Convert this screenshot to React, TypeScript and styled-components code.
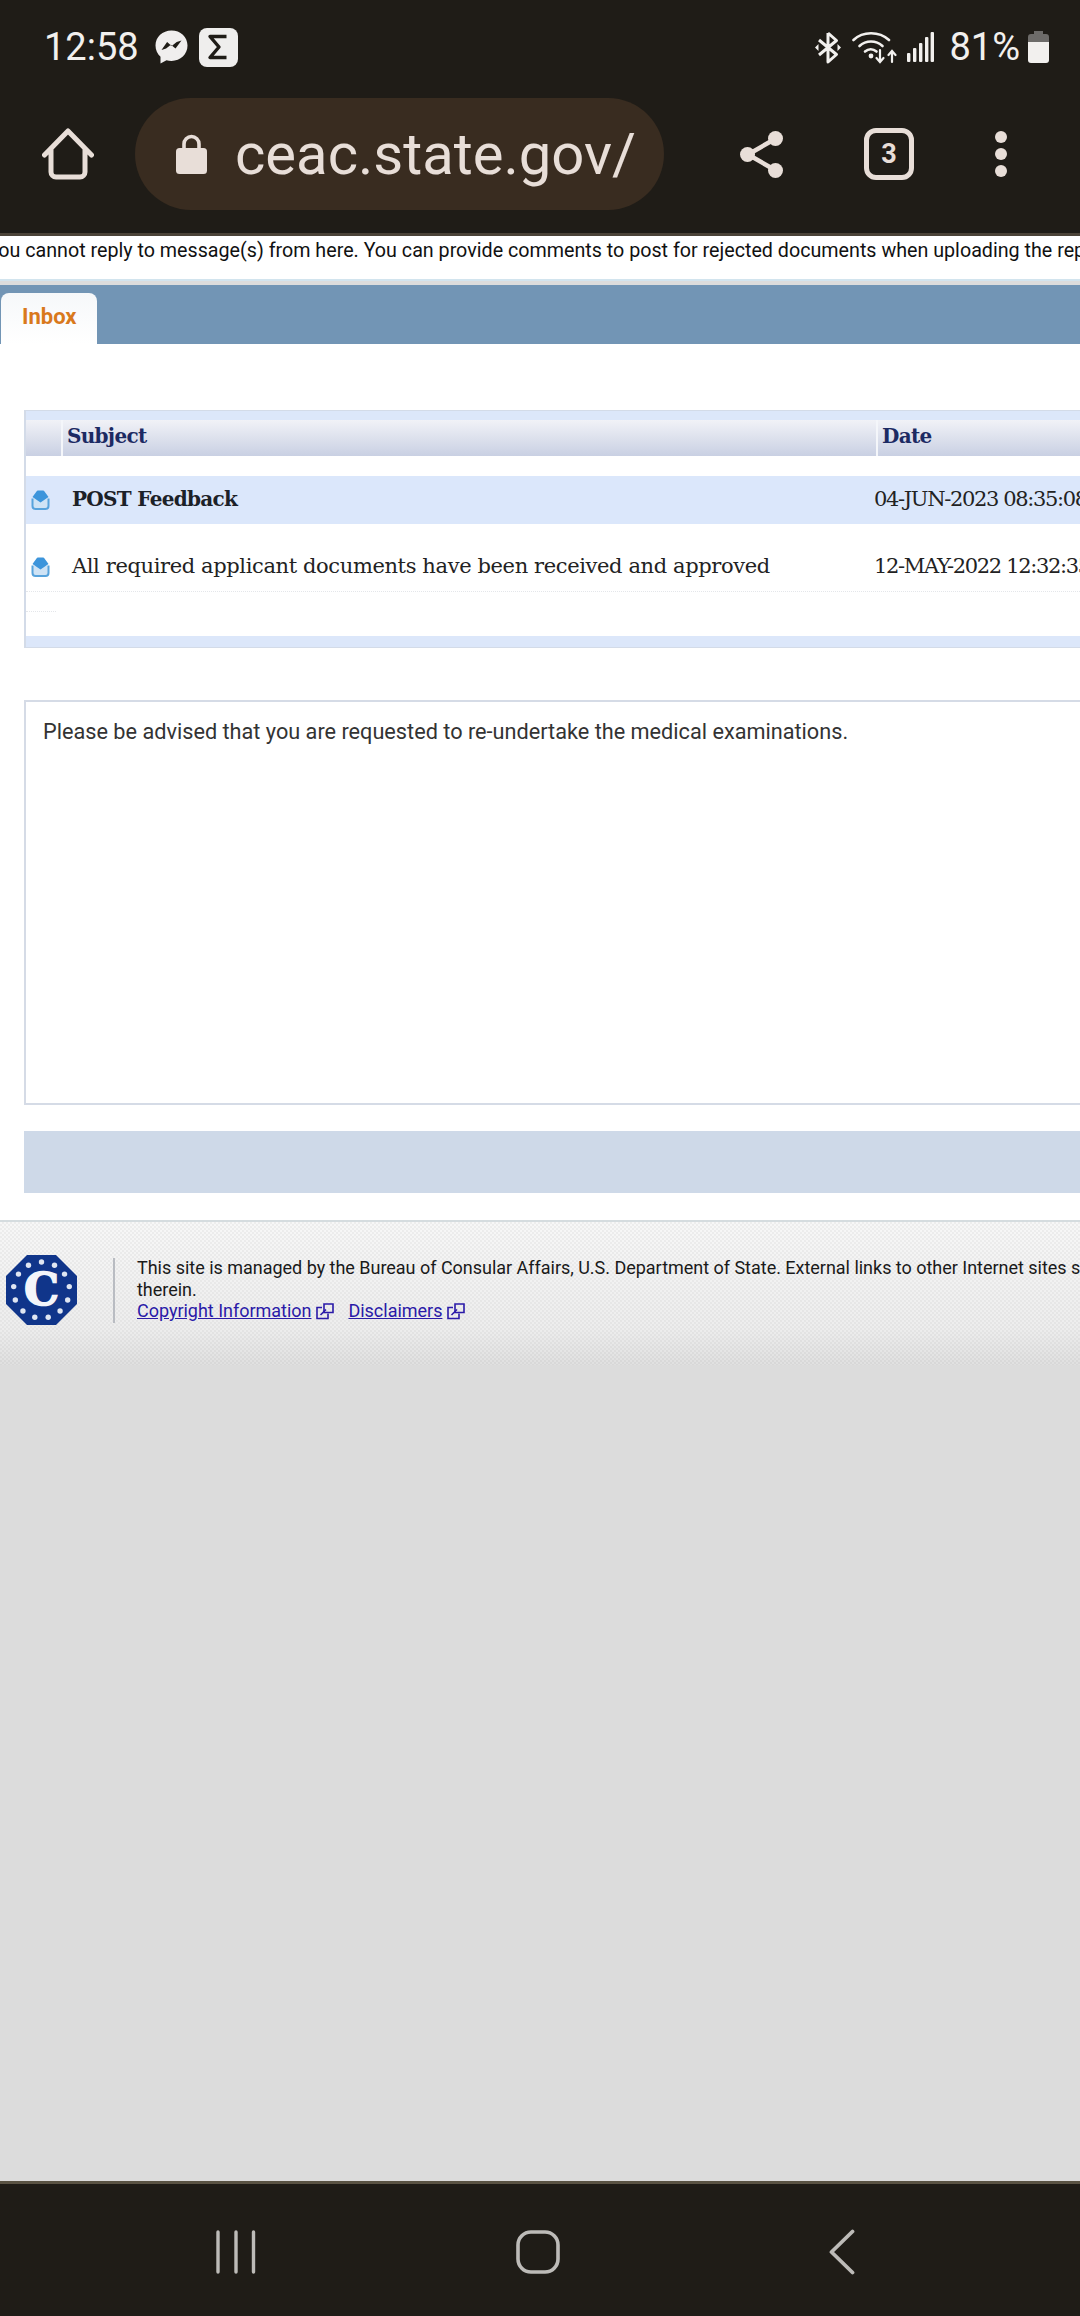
import * as React from 'react'
import styled, { createGlobalStyle } from 'styled-components'

const Global = createGlobalStyle`
  html, body { margin: 0; padding: 0; background: #dcdcdc; }
  body { font-family: Roboto, "Liberation Sans", sans-serif; }
`

const serif = `"DejaVu Serif", "Liberation Serif", serif`

const App = () => (
  <Page>
    <Global />
    <Chrome>
      <StatusBar>
        <StatusLeft>
          <Clock>12:58</Clock>
          <MessengerIcon />
          <SigmaIcon />
        </StatusLeft>
        <StatusRight>
          <BluetoothIcon />
          <WifiIcon />
          <SignalIcon />
          <Battery>81%</Battery>
          <BatteryIcon />
        </StatusRight>
      </StatusBar>
      <Toolbar>
        <HomeIcon />
        <UrlPill>
          <LockIcon />
          <UrlText>ceac.state.gov/</UrlText>
        </UrlPill>
        <ShareSlot>
          <ShareIcon />
        </ShareSlot>
        <TabCount>3</TabCount>
        <MenuDots>
          <i />
          <i />
          <i />
        </MenuDots>
      </Toolbar>
    </Chrome>
    <ChromeEdge />
    <Notice>
      You cannot reply to message(s) from here. You can provide comments to post for rejected documents when uploading the replacement documents.
    </Notice>
    <TabBar>
      <Tab>Inbox</Tab>
    </TabBar>
    <Content>
      <MessageTable>
        <TableHead>
          <HeadCell />
          <HeadCell>Subject</HeadCell>
          <HeadCell>Date</HeadCell>
        </TableHead>
        <Row $selected>
          <IconCell>
            <MailIcon />
          </IconCell>
          <SubjectCell $selected>POST Feedback</SubjectCell>
          <DateCell>04-JUN-2023 08:35:08</DateCell>
        </Row>
        <Row>
          <IconCell>
            <MailIcon />
          </IconCell>
          <SubjectCell>All required applicant documents have been received and approved</SubjectCell>
          <DateCell>12-MAY-2022 12:32:35</DateCell>
        </Row>
        <EmptyRow />
        <TableFoot />
      </MessageTable>
      <MessageBody>Please be advised that you are requested to re-undertake the medical examinations.</MessageBody>
      <ActionBand />
    </Content>
    <Footer>
      <SealIcon />
      <FooterDivider />
      <FooterText>
        This site is managed by the Bureau of Consular Affairs, U.S. Department of State. External links to other Internet sites should not be construed as an endorsement of the views or privacy policies contained
        <br />
        therein.
        <br />
        <FooterLink>Copyright Information</FooterLink>
        <ExternalIcon />
        <FooterLink $spaced>Disclaimers</FooterLink>
        <ExternalIcon />
      </FooterText>
    </Footer>
    <Blank />
    <NavEdge />
    <NavBar>
      <RecentsIcon />
      <HomeButtonIcon />
      <BackIcon />
    </NavBar>
  </Page>
)

const MessengerIcon = () => (
  <svg width="33" height="34" viewBox="0 0 33 34">
    <path d="M16.500 0.500C7.500 0.500 0.500 7 0.500 15.600c0 4.600 1.900 8.500 5 11.200v6.700l6-3.300c1.600 .45 3.300 .7 5 .7 9 0 16-6.500 16-15.300S25.500 .5 16.500 .5z" fill="#f0eeee" />
    <path d="M6.500 20l5.600-8 4.600 4 5-3.900 4.800-1.600-6 8-4.600-3.700-4.800 3.700z" fill="#1f1c17" />
  </svg>
)

const SigmaIcon = () => (
  <SigmaBox>
    <svg width="24" height="26" viewBox="0 0 24 26">
      <path d="M20.500 2.500H4L13 13 4 23.500h16.500" fill="none" stroke="#1f1c17" strokeWidth="3.400" strokeLinejoin="round" />
    </svg>
  </SigmaBox>
)

const BluetoothIcon = () => (
  <svg width="28" height="33" viewBox="0 0 28 33">
    <path d="M14 2v29l8.500-7.500L5 9M14 2l8.500 7.500L5 24" fill="none" stroke="#f2f0ee" strokeWidth="3" strokeLinejoin="round" />
    <path d="M1 16.500l3.500-3.500v7zM27 16.500l-3.500-3.500v7z" fill="#f2f0ee" />
  </svg>
)

const WifiIcon = () => (
  <svg width="45" height="34" viewBox="0 0 45 34">
    <g fill="none" stroke="#f2f0ee" strokeWidth="2.600" strokeLinecap="round">
      <path d="M1.500 10C11 1 27 1 37 10" />
      <path d="M7.500 16c6.500-6 16.500-6 23 0" />
      <path d="M13 21.500c3.500-3 8-3 11.500 0" />
      <path d="M28 20v12M24.500 28l3.500 4 3.500-4" strokeWidth="2.200" />
      <path d="M40 32V21M36.500 25l3.500-4 3.500 4" strokeWidth="2.200" />
    </g>
    <circle cx="19" cy="26" r="2.400" fill="#f2f0ee" />
  </svg>
)

const SignalIcon = () => (
  <svg width="27" height="30" viewBox="0 0 27 30">
    <g fill="#f2f0ee">
      <rect x="0" y="21" width="3.400" height="9" rx="1" />
      <rect x="6" y="16" width="3.400" height="14" rx="1" />
      <rect x="12" y="11" width="3.400" height="19" rx="1" />
      <rect x="18" y="5" width="3.400" height="25" rx="1" />
      <rect x="23.600" y="0" width="3.400" height="30" rx="1" />
    </g>
  </svg>
)

const BatteryIcon = () => (
  <svg width="21" height="32" viewBox="0 0 21 32">
    <path d="M6 0h9v3h3a3 3 0 0 1 3 3v5H0V6a3 3 0 0 1 3-3h3z" fill="#6d6b69" />
    <path d="M0 11h21v18a3 3 0 0 1-3 3H3a3 3 0 0 1-3-3z" fill="#f2f0ee" />
  </svg>
)

const HomeIcon = () => (
  <svg width="52" height="52" viewBox="0 0 52 52">
    <path d="M2.500 27L26 3l23.500 24M9 21.500V44a5 5 0 0 0 5 5h24a5 5 0 0 0 5-5V21.500" fill="none" stroke="#e8ded8" strokeWidth="5" strokeLinecap="round" strokeLinejoin="round" />
  </svg>
)

const LockIcon = () => (
  <svg width="31" height="40" viewBox="0 0 31 40">
    <path d="M8 16V10a7.500 7.500 0 0 1 15 0v6" fill="none" stroke="#e8ded8" strokeWidth="3.600" />
    <rect x="0" y="14" width="31" height="26" rx="3.500" fill="#e8ded8" />
  </svg>
)

const ShareIcon = () => (
  <svg width="43" height="47" viewBox="0 0 43 47">
    <path d="M35 8L8 23.500 35 39" fill="none" stroke="#e8ded8" strokeWidth="4.500" />
    <circle cx="35.500" cy="7.500" r="7.500" fill="#e8ded8" />
    <circle cx="7.500" cy="23.500" r="7.500" fill="#e8ded8" />
    <circle cx="35.500" cy="39.500" r="7.500" fill="#e8ded8" />
  </svg>
)

const MailIcon = () => (
  <svg width="19" height="20" viewBox="0 0 19 20">
    <path d="M1.500 8.500V16a3 3 0 0 0 3 3h10a3 3 0 0 0 3-3V8.500" fill="#cfe3f5" stroke="#58a3dc" strokeWidth="2" />
    <path d="M1.500 7l4-5.500a2 2 0 0 1 1.500-1h5a2 2 0 0 1 1.500 1l4 5.500-8 5.500z" fill="#3d95db" />
  </svg>
)

const SealIcon = () => (
  <SealBox>
    <svg width="71" height="70" viewBox="0 0 71 70">
      <path d="M21 0h29l21 21v28L50 70H21L0 49V21z" fill="#10358a" />
      {Array.from({ length: 13 }).map((_, i) => {
        const angle = (i / 13) * Math.PI * 2 - Math.PI / 2
        return <circle key={i} cx={35.500 + 28 * Math.cos(angle)} cy={35 + 28 * Math.sin(angle)} r="2.700" fill="#dfe6f2" />
      })}
      <text x="35.500" y="50" textAnchor="middle" fontFamily={serif} fontWeight="700" fontSize="44" fill="#f3f5fa" stroke="#f3f5fa" strokeWidth="1.500">
        C
      </text>
    </svg>
  </SealBox>
)

const ExternalIcon = () => (
  <ExternalBox width="18" height="17" viewBox="0 0 18 17">
    <g fill="none" stroke="#2a1aa8" strokeWidth="1.600">
      <path d="M6 4.500H1v11h11v-5" />
      <path d="M8 1h9v8.500H8z" />
      <path d="M4.500 12L10 6.500" />
    </g>
  </ExternalBox>
)

const RecentsIcon = () => (
  <svg width="42" height="44" viewBox="0 0 42 44">
    <g stroke="#bdbbb8" strokeWidth="3.400" strokeLinecap="round">
      <path d="M3 2v40M21 2v40M38.500 2v40" />
    </g>
  </svg>
)

const HomeButtonIcon = () => (
  <HomeButtonSvg width="44" height="44" viewBox="0 0 44 44">
    <rect x="2" y="2" width="40" height="40" rx="13" fill="none" stroke="#bdbbb8" strokeWidth="3.600" />
  </HomeButtonSvg>
)

const BackIcon = () => (
  <BackSvg width="26" height="46" viewBox="0 0 26 46">
    <path d="M23.500 2.500L2.500 23l21 20.500" fill="none" stroke="#bdbbb8" strokeWidth="3.800" strokeLinecap="round" strokeLinejoin="round" />
  </BackSvg>
)

const Page = styled.div`
  width: 1080px;
  height: 2316px;
  overflow: hidden;
  display: flex;
  flex-direction: column;
  background: #dcdcdc;
`
const Chrome = styled.header`
  height: 233px;
  flex: none;
  background: #1f1c17;
`
const ChromeEdge = styled.div`
  height: 3px;
  flex: none;
  background: #4b4338;
`
const StatusBar = styled.div`
  height: 94px;
  padding: 0 31px 0 44px;
  display: flex;
  align-items: center;
  justify-content: space-between;
  color: #f2f0ee;
`
const StatusLeft = styled.div`
  display: flex;
  align-items: center;
  gap: 11px;
`
const StatusRight = styled.div`
  display: flex;
  align-items: center;
  gap: 10px;
`
const Clock = styled.span`
  font-size: 38px;
  line-height: 44px;
  margin-right: 5px;
`
const SigmaBox = styled.span`
  width: 39px;
  height: 39px;
  border-radius: 8px;
  background: #efeeed;
  display: flex;
  align-items: center;
  justify-content: center;
`
const Battery = styled.span`
  font-size: 38px;
  line-height: 44px;
  margin: 0 -2px 0 5px;
`
const Toolbar = styled.div`
  margin-top: 4px;
  height: 112px;
  padding-left: 42px;
  display: flex;
  align-items: center;
  color: #e8ded8;
`
const UrlPill = styled.div`
  width: 529px;
  height: 112px;
  margin-left: 41px;
  border-radius: 56px;
  background: #392c20;
  display: flex;
  align-items: center;
  padding-left: 41px;
  box-sizing: border-box;
`
const UrlText = styled.span`
  margin-left: 28px;
  font-size: 58px;
  line-height: 70px;
  color: #e8ded8;
`
const ShareSlot = styled.span`
  display: flex;
  margin-left: 76px;
`
const TabCount = styled.span`
  width: 50px;
  height: 52px;
  margin-left: 81px;
  box-sizing: border-box;
  border: 5px solid #e8ded8;
  border-radius: 12px;
  display: flex;
  align-items: center;
  justify-content: center;
  font-size: 27px;
  font-weight: 700;
`
const MenuDots = styled.span`
  width: 14px;
  height: 46px;
  margin-left: 80px;
  display: flex;
  flex-direction: column;
  justify-content: space-between;
  i {
    width: 12px;
    height: 12px;
    margin-left: 1px;
    border-radius: 50%;
    background: #e8ded8;
  }
`
const Notice = styled.div`
  height: 45px;
  flex: none;
  box-sizing: border-box;
  padding-top: 1px;
  background: #fff;
  font-size: 19.700px;
  line-height: 28px;
  color: #111;
  white-space: nowrap;
  text-indent: -13px;
  border-bottom: 2px solid #d2e4ee;
`
const TabBar = styled.div`
  margin-top: 4px;
  height: 59px;
  flex: none;
  background: #7295b5;
  display: flex;
  align-items: flex-end;
  padding-left: 1px;
`
const Tab = styled.div`
  width: 96px;
  height: 51px;
  box-sizing: border-box;
  padding: 10px 0 0 21px;
  border-radius: 8px 8px 0 0;
  background: linear-gradient(#f6f8fa, #fff);
  color: #d9791c;
  font-size: 22px;
  font-weight: 700;
  line-height: 28px;
`
const Content = styled.main`
  background: #fff;
  padding: 66px 0 27px 24px;
  flex: none;
`
const MessageTable = styled.section`
  width: 1100px;
  height: 238px;
  box-sizing: border-box;
  background: linear-gradient(#dce7fa 10px, #fff 10px);
  border: solid #d3dbe8;
  border-width: 1px 0 1px 2px;
  padding-top: 9px;
  position: relative;
  font-family: ${serif};
`
const TableHead = styled.div`
  display: grid;
  grid-template-columns: 37px 815px 1fr;
  height: 36px;
`
const HeadCell = styled.div`
  padding-left: 4px;
  background: linear-gradient(#f1f2f7, #c9d0e3);
  border-right: 2px solid #f4f6fa;
  color: #1c2a63;
  font-size: 20px;
  font-weight: 700;
  line-height: 33px;
  letter-spacing: -0.700px;
`
const Row = styled.div<{ $selected?: boolean }>`
  display: grid;
  grid-template-columns: 46px 802px 1fr;
  align-items: center;
  height: 48px;
  margin-top: ${p => (p.$selected ? '20px' : '19px')};
  background: ${p => (p.$selected ? '#dbe7fb' : '#fff')};
  color: #222;
  font-size: 21px;
  line-height: 26px;
  white-space: nowrap;
  border-bottom: ${p => (p.$selected ? 'none' : '1px dotted #e4e6ea')};
`
const IconCell = styled.div`
  display: flex;
  padding-left: 5px;
`
const SubjectCell = styled.div<{ $selected?: boolean }>`
  margin-bottom: 2px;
  font-size: ${p => (p.$selected ? '20px' : '21px')};
  font-weight: ${p => (p.$selected ? 700 : 400)};
  letter-spacing: ${p => (p.$selected ? '-0.700px' : '-0.380px')};
  color: ${p => (p.$selected ? '#1c2128' : '#222')};
`
const DateCell = styled.div`
  margin-bottom: 2px;
  color: #222;
  letter-spacing: -1.350px;
`
const EmptyRow = styled.div`
  width: 30px;
  height: 19px;
  border-bottom: 1px dotted #e4e6ea;
`
const TableFoot = styled.div`
  position: absolute;
  left: 0;
  right: 0;
  bottom: 0;
  height: 11px;
  background: #dce7fa;
`
const MessageBody = styled.article`
  width: 1100px;
  height: 405px;
  margin-top: 52px;
  box-sizing: border-box;
  border: 2px solid #d5dbe6;
  border-right: none;
  padding: 16px 0 0 17px;
  font-size: 21.700px;
  line-height: 27px;
  color: #333;
`
const ActionBand = styled.div`
  height: 62px;
  margin: 26px -30px 0 0;
  background: #ced9e8;
`
const Footer = styled.footer`
  height: 145px;
  flex: none;
  box-sizing: border-box;
  border-top: 2px solid #d5dcdf;
  padding: 33px 0 0 6px;
  display: flex;
  align-items: flex-start;
  background:
    repeating-conic-gradient(rgba(0, 0, 0, 0.04) 0 25%, transparent 0 50%) 0 0 / 4px 4px,
    linear-gradient(#f7f7f7, #ededed 75%, #e0e0e0);
`
const SealBox = styled.span`
  flex: none;
  display: block;
  height: 70px;
`
const FooterDivider = styled.span`
  flex: none;
  width: 2px;
  height: 65px;
  margin: 3px 23px 0 36px;
  background: #b9bcc2;
`
const FooterText = styled.div`
  margin: 2px 0 0 -1px;
  font-size: 18px;
  line-height: 21.500px;
  letter-spacing: -0.020px;
  color: #1a1a1a;
  white-space: nowrap;
`
const FooterLink = styled.a<{ $spaced?: boolean }>`
  color: #2a1aa8;
  text-decoration: underline;
  margin-left: ${p => (p.$spaced ? '14px' : '0')};
`
const ExternalBox = styled.svg`
  margin-left: 5px;
  vertical-align: -3px;
`
const Blank = styled.div`
  flex: 1;
`
const NavEdge = styled.div`
  height: 3px;
  flex: none;
  background: #5a5344;
`
const NavBar = styled.nav`
  height: 132px;
  flex: none;
  box-sizing: border-box;
  background: #1f1c17;
  padding: 4px 0 0 215px;
  display: flex;
  align-items: center;
`
const HomeButtonSvg = styled.svg`
  margin-left: 259px;
`
const BackSvg = styled.svg`
  margin-left: 269px;
`

export default App
